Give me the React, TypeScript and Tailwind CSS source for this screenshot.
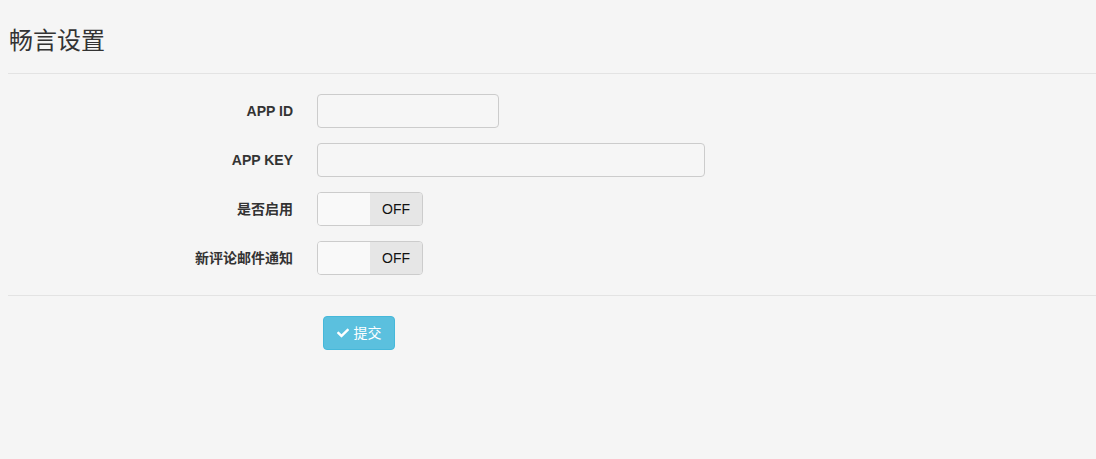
import { FaCheck } from "react-icons/fa";

const font = { fontFamily: '"Liberation Sans", Arial, "Noto Sans CJK SC", sans-serif' };

function Row({ label, children }: { label: string; children: React.ReactNode }) {
  return (
    <div className="flex items-center mb-[15px]">
      <label className="w-[285px] text-right text-[14px] font-bold text-[#333]">{label}</label>
      <div className="ml-6">{children}</div>
    </div>
  );
}

function Switch() {
  return (
    <div className="flex w-[106px] h-[34px] border border-[#ccc] rounded-[4px] overflow-hidden">
      <span className="w-[52px] bg-[#f9f9f9]" />
      <span className="flex-1 flex items-center justify-center bg-[#e6e6e6] text-[14px] text-[#111]">OFF</span>
    </div>
  );
}

export default function App() {
  return (
    <div className="min-h-[459px] bg-[#f5f5f5] pl-2" style={font}>
      <h3 className="pt-[28px] pb-[19px] pl-px text-[24px] leading-[26px] text-[#333]">畅言设置</h3>
      <div className="border-t border-[#e3e3e3]" />
      <div className="pt-5 pb-[5px]">
        <Row label="APP ID">
          <input className="block w-[182px] h-[34px] border border-[#ccc] rounded-[4px] bg-[#f6f6f6]" />
        </Row>
        <Row label="APP KEY">
          <input className="block w-[388px] h-[34px] border border-[#ccc] rounded-[4px] bg-[#f6f6f6]" />
        </Row>
        <Row label="是否启用">
          <Switch />
        </Row>
        <Row label="新评论邮件通知">
          <Switch />
        </Row>
      </div>
      <div className="border-t border-[#e3e3e3]" />
      <div className="pt-5 pl-[315px]">
        <button className="flex items-center gap-[5px] h-[34px] w-[72px] justify-center bg-[#5bc0de] border border-[#46b8da] rounded-[4px] text-white text-[14px]">
          <FaCheck size={12} />
          提交
        </button>
      </div>
    </div>
  );
}
